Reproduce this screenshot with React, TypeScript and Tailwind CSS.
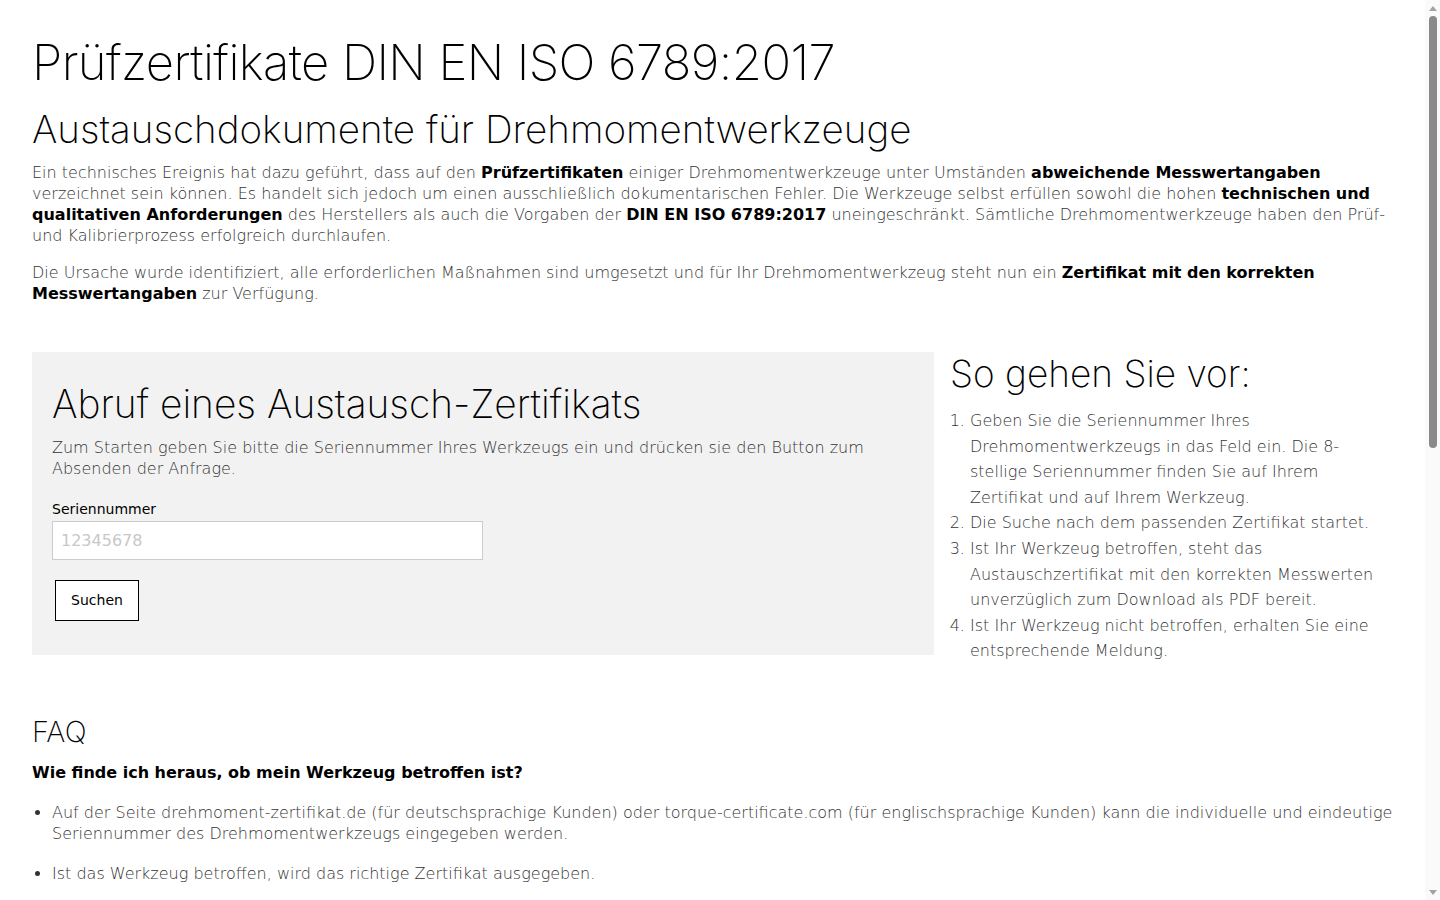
import React from "react";

const heading = "font-['Inter',sans-serif] font-extralight text-black [font-variant-ligatures:none]";

export default function App() {
  return (
    <div className="font-['DejaVu_Sans',sans-serif] font-extralight text-[16px] leading-[21px] text-[#333] bg-white pl-8 pr-[47px] pt-[31px] pb-[200px]">
      <h1 className={`${heading} text-[49px] leading-[64px] tracking-[-0.6px]`}>Prüfzertifikate DIN EN ISO 6789:2017</h1>
      <h2 className={`${heading} text-[38.6px] leading-[52px] mt-[8px] mb-[7px]`}>Austauschdokumente für Drehmomentwerkzeuge</h2>
      <p className="mb-4">
        Ein technisches Ereignis hat dazu geführt, dass auf den <b className="font-bold text-black">Prüfzertifikaten</b> einiger Drehmomentwerkzeuge unter Umständen <b className="font-bold text-black">abweichende Messwertangaben</b> verzeichnet sein können. Es handelt sich jedoch um einen ausschließlich dokumentarischen Fehler. Die Werkzeuge selbst erfüllen sowohl die hohen <b className="font-bold text-black">technischen und qualitativen Anforderungen</b> des Herstellers als auch die Vorgaben der <b className="font-bold text-black">DIN EN ISO 6789:2017</b> uneingeschränkt. Sämtliche Drehmomentwerkzeuge haben den Prüf- und Kalibrierprozess erfolgreich durchlaufen.
      </p>
      <p>
        Die Ursache wurde identifiziert, alle erforderlichen Maßnahmen sind umgesetzt und für Ihr Drehmomentwerkzeug steht nun ein <b className="font-bold text-black">Zertifikat mit den korrekten Messwertangaben</b> zur Verfügung.
      </p>

      <div className="grid grid-cols-[902px_1fr] items-start gap-4 mt-[48px]">
        <div className="bg-[#f2f2f2] px-5 pt-[26px] pb-[34px]">
          <h3 className={`${heading} text-[38.9px] leading-[52px] mb-[7px]`}>Abruf eines Austausch-Zertifikats</h3>
          <p>Zum Starten geben Sie bitte die Seriennummer Ihres Werkzeugs ein und drücken sie den Button zum Absenden der Anfrage.</p>
          <label className="block mt-[20px] text-[14px] leading-[20px] font-normal text-black">Seriennummer</label>
          <input
            className="block w-[431px] h-[39px] border border-[#ccc] bg-white px-2 mt-[2px] text-[16px] font-normal placeholder:text-[#c8c8c8] outline-none"
            placeholder="12345678"
          />
          <button className="block mt-[20px] ml-[3px] w-[84px] h-[41px] border border-black bg-white text-[14px] font-normal text-black">Suchen</button>
        </div>
        <div>
          <h3 className={`${heading} text-[37px] leading-[52px] -mt-[4px] mb-[8px]`}>So gehen Sie vor:</h3>
          <ol className="list-decimal pl-5 leading-[25.6px] pr-4">
            <li>Geben Sie die Seriennummer Ihres Drehmomentwerkzeugs in das Feld ein. Die 8-stellige Seriennummer finden Sie auf Ihrem Zertifikat und auf Ihrem Werkzeug.</li>
            <li>Die Suche nach dem passenden Zertifikat startet.</li>
            <li>Ist Ihr Werkzeug betroffen, steht das Austauschzertifikat mit den korrekten Messwerten unverzüglich zum Download als PDF bereit.</li>
            <li>Ist Ihr Werkzeug nicht betroffen, erhalten Sie eine entsprechende Meldung.</li>
          </ol>
        </div>
      </div>

      <h3 className={`${heading} text-[29px] leading-[40px] mt-[48px] mb-[10px]`}>FAQ</h3>
      <p className="font-bold text-black mb-[19px]">Wie finde ich heraus, ob mein Werkzeug betroffen ist?</p>
      <ul className="list-disc pl-5">
        <li className="mb-[19px]">Auf der Seite drehmoment-zertifikat.de (für deutschsprachige Kunden) oder torque-certificate.com (für englischsprachige Kunden) kann die individuelle und eindeutige Seriennummer des Drehmomentwerkzeugs eingegeben werden.</li>
        <li className="mb-[19px]">Ist das Werkzeug betroffen, wird das richtige Zertifikat ausgegeben.</li>
      </ul>

      <div className="fixed top-0 right-0 h-screen w-[15px] bg-[#fafafa] flex flex-col items-center">
        <div className="h-4 flex items-center justify-center">
          <svg width="8" height="5" viewBox="0 0 8 5"><path d="M0 5 L4 0 L8 5 Z" fill="#a3a3a3" /></svg>
        </div>
        <div className="w-[8px] h-[432px] rounded-full bg-[#8a8a8a]" />
        <div className="flex-1" />
        <div className="h-4 flex items-center justify-center">
          <svg width="8" height="5" viewBox="0 0 8 5"><path d="M0 0 L8 0 L4 5 Z" fill="#a3a3a3" /></svg>
        </div>
      </div>
    </div>
  );
}
